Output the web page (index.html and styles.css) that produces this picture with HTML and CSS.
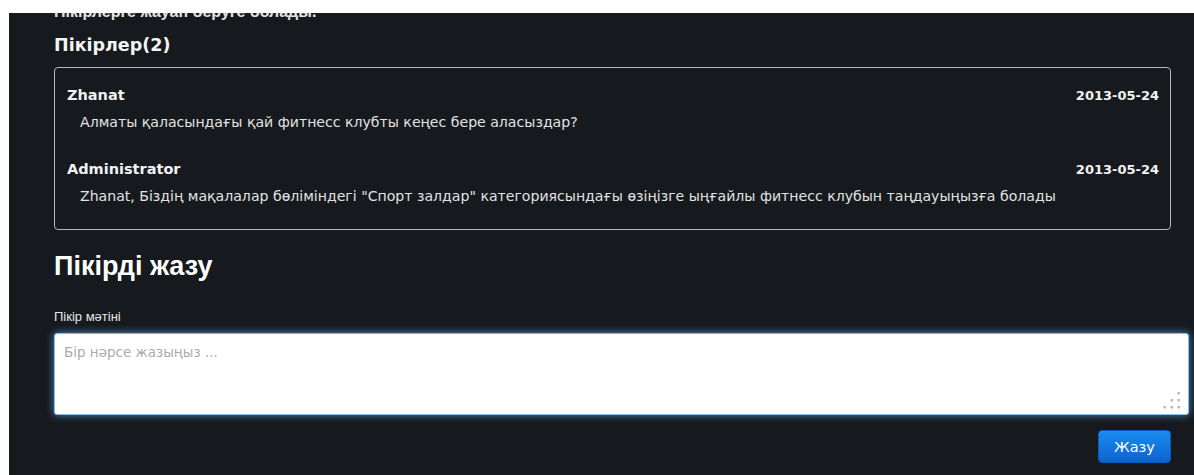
FILE: index.html
```html
<!DOCTYPE html>
<html lang="kk">
<head>
<meta charset="utf-8">
<title>Пікірлер</title>
<link rel="stylesheet" href="styles.css">
</head>
<body>
<div class="page">
  <p class="lead">Пікірлерге жауап беруге болады.</p>

  <h3 class="comments-title">Пікірлер(2)</h3>
  <div class="comments">
    <div class="comment">
      <div class="comment-head">
        <span class="author">Zhanat</span>
        <span class="date">2013-05-24</span>
      </div>
      <p class="comment-text">Алматы қаласындағы қай фитнесс клубты кеңес бере аласыздар?</p>
    </div>
    <div class="comment">
      <div class="comment-head">
        <span class="author">Administrator</span>
        <span class="date">2013-05-24</span>
      </div>
      <p class="comment-text">Zhanat, Біздің мақалалар бөліміндегі "Спорт залдар" категориясындағы өзіңізге ыңғайлы фитнесс клубын таңдауыңызға болады</p>
    </div>
  </div>

  <h2 class="form-title">Пікірді жазу</h2>
  <label class="field-label" for="comment-body">Пікір мәтіні</label>
  <div class="field">
    <textarea id="comment-body" class="field-input" placeholder="Бір нәрсе жазыңыз ..."></textarea>
    <svg class="grip" width="17" height="17" viewBox="0 0 17 17" aria-hidden="true">
      <g fill="#b5b9be">
        <rect x="14.5" y="0" width="2.5" height="2.5"/>
        <rect x="7.5" y="7" width="2.5" height="2.5"/>
        <rect x="14.5" y="7" width="2.5" height="2.5"/>
        <rect x="0.5" y="14" width="2.5" height="2.5"/>
        <rect x="7.5" y="14" width="2.5" height="2.5"/>
        <rect x="14.5" y="14" width="2.5" height="2.5"/>
      </g>
    </svg>
  </div>
  <div class="actions">
    <button class="btn-primary" type="submit">Жазу</button>
  </div>
</div>
</body>
</html>
```

FILE: styles.css
```css
html, body {
  margin: 0;
  background: #ffffff;
}

.page {
  box-sizing: border-box;
  height: 462px;
  margin: 13px 0 0 9px;
  padding: 0 23px 0 45px;
  overflow: hidden;
  background: #16191d;
  color: #ececec;
  font-family: "Liberation Sans", Arial, sans-serif;
}

.lead {
  margin: -10px 0 0;
  font-size: 16px;
  line-height: 18px;
  font-weight: bold;
  color: #e2e2e2;
}

.comments-title {
  margin: 14px 0 12px;
  font-family: "DejaVu Sans", sans-serif;
  font-size: 17.5px;
  line-height: 20px;
  font-weight: bold;
  color: #f4f4f4;
}

.comments {
  border: 1px solid #b4b7bb;
  border-radius: 4px;
  padding: 18px 11px 24px 12px;
  font-family: "DejaVu Sans", sans-serif;
}

.comment + .comment {
  margin-top: 29px;
}

.comment-head {
  display: flex;
  justify-content: space-between;
  align-items: baseline;
  line-height: 18px;
}

.author {
  font-size: 14.5px;
  font-weight: bold;
  color: #f2f2f2;
}

.date {
  font-size: 13px;
  font-weight: bold;
  color: #f2f2f2;
}

.comment-text {
  margin: 8px 0 0 13px;
  font-size: 14.1px;
  line-height: 18px;
  color: #e2e2e2;
}

.form-title {
  margin: 20px 0 0;
  font-size: 27px;
  line-height: 32px;
  font-weight: bold;
  color: #ffffff;
}

.field-label {
  display: block;
  margin-top: 27px;
  font-size: 13px;
  line-height: 16px;
  color: #e8e8e8;
}

.field {
  position: relative;
  margin-top: 8px;
  width: calc(100% + 18px);
}

.field-input {
  display: block;
  box-sizing: border-box;
  width: 100%;
  height: 82px;
  margin: 0;
  padding: 9px 9px;
  border: 1px solid #86bde9;
  border-radius: 3px;
  background: #ffffff;
  box-shadow: 0 0 9px rgba(82, 168, 236, 0.8), inset 0 1px 1px rgba(0, 0, 0, 0.06);
  font-family: "DejaVu Sans", sans-serif;
  font-size: 13.5px;
  line-height: 18px;
  color: #333333;
  resize: none;
  outline: none;
}

.field-input::placeholder {
  color: #acacac;
}

.grip {
  position: absolute;
  right: 9px;
  bottom: 6px;
}

.actions {
  display: flex;
  justify-content: flex-end;
  margin-top: 15px;
}

.btn-primary {
  width: 73px;
  height: 33px;
  padding: 0;
  border: 1px solid #0a5bb8;
  border-radius: 4px;
  background: linear-gradient(#1a8cf0, #0b63cf);
  color: #ffffff;
  font-family: "DejaVu Sans", sans-serif;
  font-size: 14.5px;
  cursor: pointer;
}
```
